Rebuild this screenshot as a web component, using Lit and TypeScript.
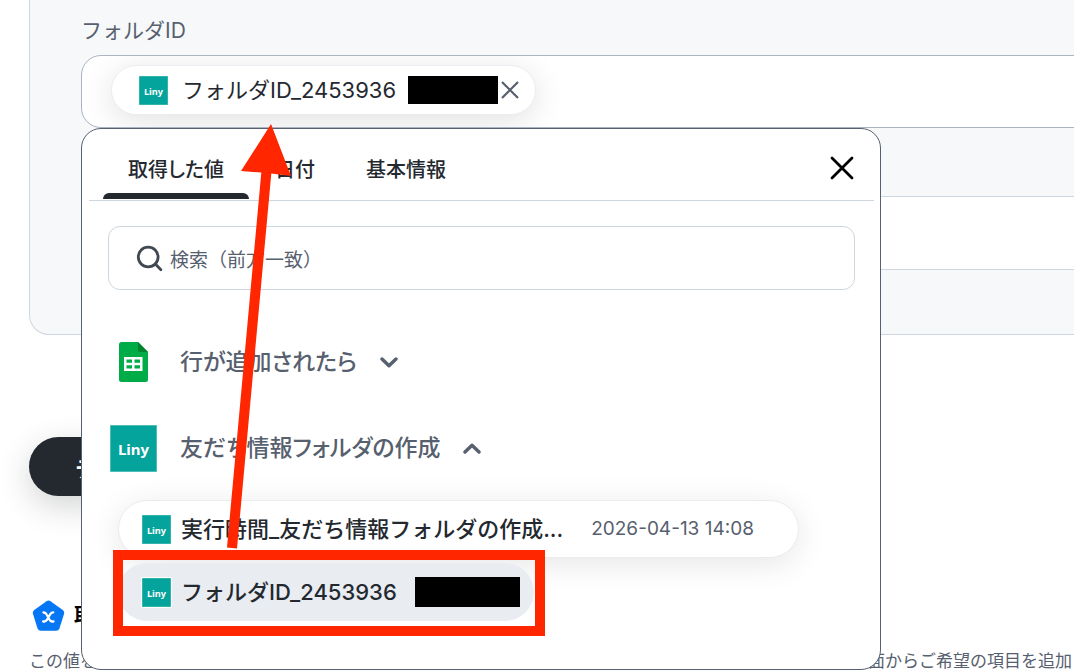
import { LitElement, html, css, svg } from "lit";
import { customElement, property, state } from "lit/decorators.js";

@customElement("liny-logo")
class LinyLogo extends LitElement {
  static styles = css`
    :host { display: block; flex: none; }
    .mark { display: block; width: 100%; height: 100%; }
    .word { font: 700 15px "Noto Sans", "Open Sans", sans-serif; fill: #fff; }
  `;
  render() {
    return html`<svg class="mark" viewBox="0 0 47 47" role="img" aria-label="Liny">
      <rect width="47" height="47" fill="#7fd0ca" />
      <rect x="0.6" y="0.6" width="45.8" height="45.8" fill="#04a39b" />
      <text class="word" x="23.5" y="30" text-anchor="middle">Liny</text>
    </svg>`;
  }
}

@customElement("value-picker")
class ValuePicker extends LitElement {
  @state() tab = 0;
  @property({ type: Array }) tabs = ["取得した値", "日付", "基本情報"];

  static styles = css`
    :host {
      display: block; box-sizing: border-box; min-height: 542px;
      background: #fff; border: 1px solid #57606e; border-radius: 20px;
      color: #24292f;
    }
    button, input { font: inherit; color: inherit; border: 0; background: none; margin: 0; padding: 0; }
    button { cursor: pointer; text-align: left; }
    .head {
      display: flex; align-items: stretch; justify-content: space-between;
      height: 72px; margin: 0 6px 0 7px; padding-left: 14px; box-sizing: border-box;
      border-bottom: 1px solid #ced6df;
    }
    .tabs { display: flex; gap: 1px; }
    .tab {
      display: flex; flex-direction: column; justify-content: space-between;
      font-size: 20px; line-height: 28px; font-weight: 500; padding: 27px 0 0;
      font-feature-settings: "palt";
    }
    .tab span { padding: 0 25px; }
    .tab::after { content: ""; height: 6px; margin-bottom: 1px; border-radius: 6px 6px 0 0; }
    .tab.on::after { background: #24292f; }
    .close { padding: 7px 20px 0; }
    .close svg, .icon { display: block; }
    .search {
      display: flex; align-items: center; gap: 7px; height: 64px; box-sizing: border-box;
      margin: 25px 25px 0 26px; padding: 0 27px; border: 1px solid #ced6df; border-radius: 12px;
    }
    .search input { flex: 1; min-width: 0; outline: 0; font-size: 19px; line-height: 28px; padding-top: 5px; }
    .search input::placeholder { color: #57606e; opacity: 1; }
    .group {
      display: grid; grid-template-columns: 47px auto auto; align-items: center;
      justify-items: center; justify-content: start; column-gap: 23px;
      height: 48px; margin-left: 28px;
      font-size: 23px; line-height: 32px; font-weight: 500; color: #57606e;
      font-feature-settings: "palt";
    }
    .first { margin-top: 48px; }
    .second { margin-top: 38px; }
    .big { width: 47px; height: 47px; }
    .small { width: 29px; height: 29px; }
    .items { display: flex; flex-direction: column; align-items: flex-start; gap: 5px; margin: 28px 36px 0; }
    .item {
      display: flex; align-items: center; gap: 10px; height: 58px; box-sizing: border-box;
      border-radius: 29px; font-size: 22px; line-height: 32px; font-weight: 500; padding: 0 44px 0 23px;
    }
    .card { background: #fff; border: 1px solid #e9ecf1; box-shadow: 0 6px 32px rgba(0, 0, 0, 0.1); }
    .card time { font-size: 19px; font-weight: 400; color: #57606e; margin-left: 18px; }
    .chosen { background: #e9ecf1; padding: 0 14px 0 24px; position: relative; }
    .chosen liny-logo { outline: 1px solid #fff; }
    .mask { width: 105px; height: 30px; background: #000; margin-left: 8px; }
  `;

  render() {
    return html`
      <div class="head">
        <div class="tabs" role="tablist">
          ${this.tabs.map((t, i) => html`<button role="tab" class="tab ${i === this.tab ? "on" : ""}"
            aria-selected=${i === this.tab} @click=${() => (this.tab = i)}><span>${t}</span></button>`)}
        </div>
        <button class="close" aria-label="閉じる">
          <svg width="24" height="24" viewBox="0 0 24 24" stroke="#000" stroke-width="2.8" stroke-linecap="round"><path d="M2 2 22 22M22 2 2 22" /></svg>
        </button>
      </div>
      <div class="search">
        <svg class="icon" width="27" height="27" viewBox="0 0 27 27" fill="none" stroke="#404852" stroke-width="2.8" stroke-linecap="round"><circle cx="12.2" cy="12" r="9.9" /><path d="m19.3 19.1 5.6 5.6" /></svg>
        <input type="text" aria-label="検索" placeholder="検索（前方一致）" />
      </div>
      <button class="group first" aria-expanded="false">
        <svg class="icon" width="29" height="40" viewBox="0 0 29 40"><path d="M2.500 0H19l10 10v27.500a2.500 2.500 0 0 1-2.500 2.500h-24A2.500 2.500 0 0 1 0 37.500v-35A2.500 2.500 0 0 1 2.500 0Z" fill="#00ac47" /><path d="M19 0v8a2 2 0 0 0 2 2h8Z" fill="#00832d" /><path fill="#fff" fill-rule="evenodd" d="M5 15h18.500v14H5ZM7.500 17.500v3.300h5.500v-3.300ZM15.500 17.500v3.300H21v-3.300ZM7.500 23.200v3.300h5.500v-3.300ZM15.500 23.200v3.300H21v-3.300Z" /></svg>
        <span>行が追加されたら</span>
        <svg class="icon" width="18" height="12" viewBox="0 0 18 12" fill="none" stroke="#57606e" stroke-width="3.4"><path d="m2 3 7 6.800 7-6.800" stroke-linecap="round" stroke-linejoin="round" /></svg>
      </button>
      <button class="group second" aria-expanded="true">
        <liny-logo class="big"></liny-logo>
        <span>友だち情報フォルダの作成</span>
        <svg class="icon" width="18" height="12" viewBox="0 0 18 12" fill="none" stroke="#57606e" stroke-width="3.4"><path d="m2 10 7-6.800 7 6.800" stroke-linecap="round" stroke-linejoin="round" /></svg>
      </button>
      <div class="items">
        <button class="item card"><liny-logo class="small"></liny-logo><span>実行時間_友だち情報フォルダの作成...</span><time>2026-04-13 14:08</time></button>
        <button class="item chosen"><liny-logo class="small"></liny-logo><span>フォルダID_2453936</span><span class="mask"></span></button>
      </div>
    `;
  }
}

@customElement("app-root")
class AppRoot extends LitElement {
  static styles = css`
    :host {
      display: block; min-height: 100vh; max-height: 100vh; overflow: hidden; background: #fff; color: #24292f;
      font-family: Inter, "Noto Sans CJK JP", sans-serif;
    }
    button { font: inherit; border: 0; background: none; padding: 0; cursor: pointer; }
    .panel {
      margin: 0 -40px 0 29px; padding: 16px 0 64px 51px; background: #f7f8fa;
      border: 1px solid #ced6df; border-top: 0; border-radius: 0 0 20px 20px;
    }
    .label { display: block; font-size: 21px; line-height: 30px; margin-bottom: 9px; color: #57606e; }
    .anchor { position: relative; }
    .field {
      display: flex; align-items: center; height: 73px; box-sizing: border-box; padding: 0 0 3px 29px;
      background: #fff; border: 1px solid #abb4c0; border-radius: 20px; overflow: hidden;
    }
    .field input { flex: 1; min-width: 0; height: 40px; border: 0; outline: 0; background: none; font: inherit; }
    .field.plain { margin-top: 68px; height: 74px; border-color: #ced6df; }
    .chip {
      display: flex; align-items: center; height: 50px; box-sizing: border-box; padding: 0 16px 0 27px;
      border: 1px solid #e9ecf1; border-radius: 25px; background: #fff; box-shadow: 0 6px 32px rgba(0, 0, 0, 0.12);
      font-size: 22px; line-height: 32px;
    }
    .chip liny-logo { width: 29px; height: 29px; margin-right: 14px; }
    .mask { width: 90px; height: 28px; background: #000; margin: 0 3px 0 12px; }
    .chip svg { display: block; }
    value-picker { position: absolute; top: 100%; left: 0; width: 800px; z-index: 1; }
    .note { position: absolute; top: 100%; left: 0; z-index: 2; overflow: visible; pointer-events: none; }
    .test {
      display: block; height: 59px; margin: 102px 0 0 29px; padding: 0 46px; border-radius: 30px;
      background: #24292f; color: #fff; font-size: 22px; font-weight: 700; box-shadow: 0 10px 32px rgba(36, 41, 47, 0.2);
    }
    .title { display: flex; align-items: center; gap: 8px; margin: 102px 0 0 32px; font-size: 20px; line-height: 36px; font-weight: 700; color: #000; }
    .help { display: flex; justify-content: space-between; margin: 14px 2px 0 29px; font-size: 17px; line-height: 26px; color: #57606e; white-space: nowrap; }
  `;

  render() {
    return html`
      <section class="panel">
        <label class="label" for="folder">フォルダID</label>
        <div class="anchor">
          <div class="field">
            <span class="chip">
              <liny-logo></liny-logo><span>フォルダID_2453936</span><span class="mask"></span>
              <button aria-label="削除"><svg width="18" height="18" viewBox="0 0 18 18" stroke="#57606e" stroke-width="2.2"><path d="M1 1 17 17M17 1 1 17" /></svg></button>
            </span>
            <input id="folder" type="text" />
          </div>
          <value-picker></value-picker>
          <svg class="note" width="800" height="543" viewBox="0 0 800 543" aria-hidden="true">
            ${svg`<path d="M190-4 210 48 190.300 45.600 156 420.500 146 419.500 180.300 44.600 160 43Z" fill="#ff2600" />
            <rect x="37" y="427" width="422" height="76" fill="none" stroke="#ff2600" stroke-width="10" />`}
          </svg>
        </div>
        <div class="field plain"><input type="text" aria-label="値" /></div>
      </section>
      <button class="test">テスト</button>
      <div class="title">
        <svg width="34" height="34" viewBox="0 0 34 34"><path d="M14.500 2.200q2-1.400 4 0l12.300 8.700q2 1.500 1.300 3.800l-4.600 14.500q-.8 2.500-3.500 2.500H9q-2.700 0-3.500-2.500L.9 14.700q-.7-2.300 1.300-3.800Z" fill="#0576f4" /><path d="M11.500 13.500h.5c1.500 0 2 .8 2.600 2l2.800 5c.6 1.200 1.200 2 2.700 2h1.400M21.300 13.300c-1.500 0-2.200.6-3 1.900l-3.200 5.400c-.8 1.300-1.500 1.900-3 1.900h-.9" fill="none" stroke="#fff" stroke-width="2.300" stroke-linecap="round" /></svg>
        <span>取得した値</span>
      </div>
      <p class="help"><span>この値を</span><span>面からご希望の項目を追加</span></p>
    `;
  }
}
